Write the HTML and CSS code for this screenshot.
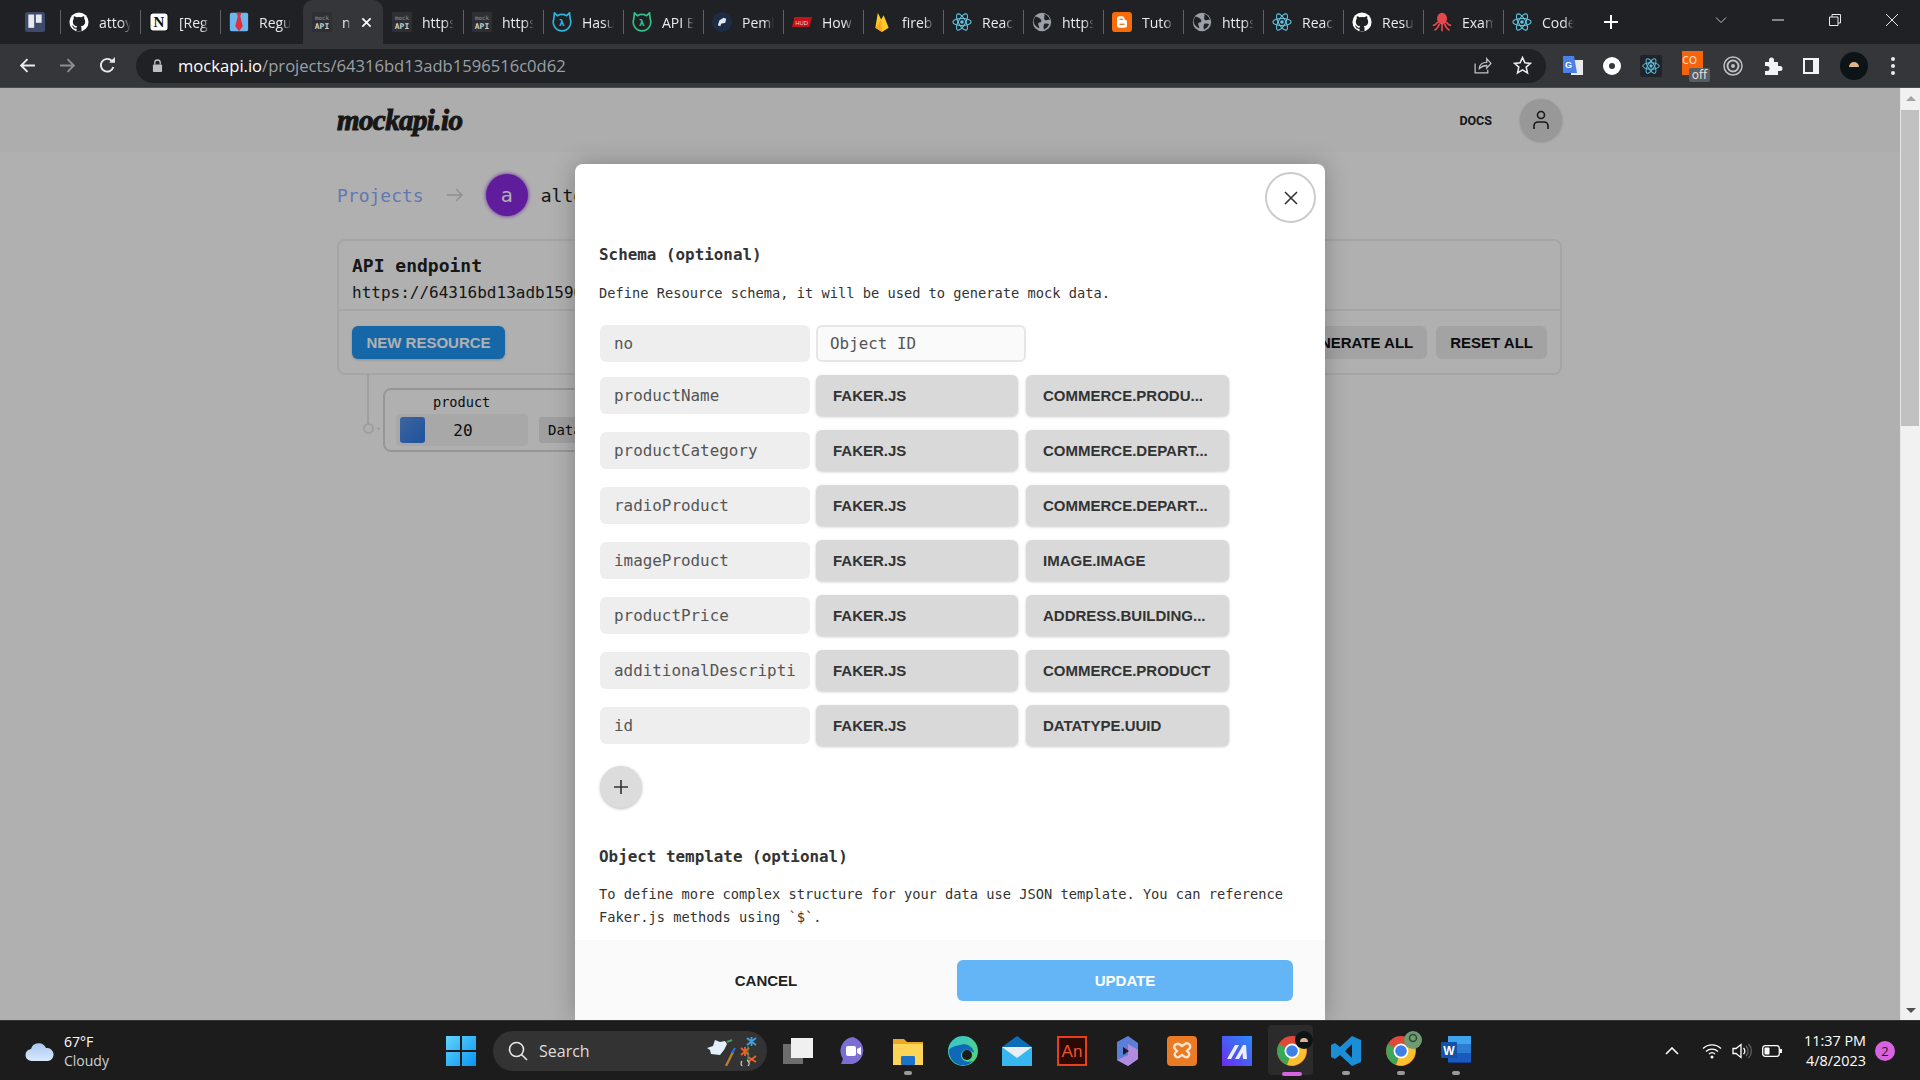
FILE: index.html
```html
<!DOCTYPE html>
<html lang="en">
<head>
    <meta charset="UTF-8">
    <meta name="viewport" content="width=device-width, initial-scale=1.0">
    <title>mockapi.io</title>
    <link rel="stylesheet" href="styles.css">
</head>
<body>
    <svg class="sprite" width="0" height="0">
        <defs>
            <symbol id="i-github" viewBox="0 0 24 24"><circle cx="12" cy="12" r="11.5" fill="#fff"/><path fill="#202124" d="M9 23.2v-3.1c-3.2.7-3.9-1.4-3.9-1.4-.5-1.3-1.3-1.7-1.3-1.7-1-.7.1-.7.1-.7 1.2.1 1.8 1.2 1.8 1.2 1 1.8 2.7 1.2 3.4 1 .1-.8.4-1.300.7-1.500-2.500-.3-5.200-1.300-5.200-5.700 0-1.300.5-2.300 1.200-3.100-.1-.3-.5-1.500.1-3 0 0 1-.3 3.200 1.200a11 11 0 0 1 5.800 0c2.200-1.500 3.200-1.200 3.200-1.200.6 1.500.2 2.700.1 3 .7.8 1.200 1.800 1.200 3.100 0 4.400-2.700 5.400-5.200 5.700.4.4.8 1.100.8 2.100v4.100z"/></symbol>
            <symbol id="i-react" viewBox="0 0 24 24"><g fill="none" stroke="#61c3e0" stroke-width="1.300"><ellipse cx="12" cy="12" rx="11" ry="4.300"/><ellipse cx="12" cy="12" rx="11" ry="4.300" transform="rotate(60 12 12)"/><ellipse cx="12" cy="12" rx="11" ry="4.300" transform="rotate(120 12 12)"/></g><circle cx="12" cy="12" r="2.200" fill="#61c3e0"/></symbol>
            <symbol id="i-globe" viewBox="0 0 24 24"><circle cx="12" cy="12" r="11" fill="#9aa0a6"/><path fill="#202124" d="M4 5.500c3 .5 6 2 7 4 .8 1.600-.5 3-2 3s-2 2-1 4l1 3c-4-1-7-5-7-8 0-2.500 1-4.500 2-6zM15 2.500c3 1 5.500 3.500 6.500 6.500l-4 1c-2 .2-3-1-3-2.500s.7-3 .5-5zM15 14c2-.5 4-.5 5.500.5-1 3-3 5.500-6 6.500-1-2-1-5.500.5-7z"/></symbol>
            <symbol id="i-mock" viewBox="0 0 24 24"><rect width="24" height="24" fill="#2e2f32"/><text x="12" y="9.500" class="mock-a">mock</text><text x="12" y="20" class="mock-b">API</text></symbol>
            <symbol id="i-hasura" viewBox="0 0 24 24"><path d="M3 1l3.500 3.500a11 11 0 0 1 11 0L21 1l1 8a10.500 10.500 0 1 1-20 0z" fill="none" stroke="currentColor" stroke-width="2"/><text x="12" y="17" class="hasura-l" fill="currentColor">λ</text></symbol>
        </defs>
    </svg>

    <div class="tabstrip">
        <div class="tab-pinned">
            <svg class="fav" viewBox="0 0 24 24"><rect width="24" height="24" rx="3" fill="#3d4a6b"/><rect x="4" y="3" width="7" height="16" fill="#e8e8f0"/><rect x="13" y="3" width="7" height="10" fill="#e8e8f0"/></svg>
        </div>
        <div class="tab"><svg class="fav"><use href="#i-github"/></svg><span class="tab-title">attoy</span></div>
        <div class="tab"><svg class="fav" viewBox="0 0 24 24"><rect x="1" y="1" width="22" height="22" rx="4" fill="#fff" stroke="#111" stroke-width="1.500"/><text x="12" y="18.500" class="notion-l">N</text></svg><span class="tab-title">[Reg</span></div>
        <div class="tab tab-before-active"><svg class="fav" viewBox="0 0 24 24"><rect x="1" y="1" width="22" height="22" rx="2" fill="#6db6ee"/><path d="M9 1h6l-1.500 4 3 12-4.500 6-4.500-6 3-12z" fill="#e0303a"/></svg><span class="tab-title">Regu</span></div>
        <div class="tab tab-active"><svg class="fav"><use href="#i-mock"/></svg><span class="tab-title tab-title-short">n</span><svg class="tab-close" viewBox="0 0 12 12"><path d="M1.500 1.500l9 9M10.500 1.500l-9 9" stroke="#fff" stroke-width="1.800"/></svg></div>
        <div class="tab"><svg class="fav"><use href="#i-mock"/></svg><span class="tab-title">https</span></div>
        <div class="tab"><svg class="fav"><use href="#i-mock"/></svg><span class="tab-title">https</span></div>
        <div class="tab"><svg class="fav hasura-blue"><use href="#i-hasura"/></svg><span class="tab-title">Hasu</span></div>
        <div class="tab"><svg class="fav hasura-green"><use href="#i-hasura"/></svg><span class="tab-title">API E</span></div>
        <div class="tab"><svg class="fav" viewBox="0 0 24 24"><circle cx="12" cy="12" r="12" fill="#1d2c44"/><path d="M7 16l2-6 5-3 3 1-1 5-5 1-1 3z" fill="#dfe6f0"/></svg><span class="tab-title">Pemb</span></div>
        <div class="tab"><svg class="fav" viewBox="0 0 24 24"><path d="M3 6h21l-3 12H0z" fill="#c4121a"/><text x="11.500" y="15" class="mud-l">HUD</text></svg><span class="tab-title">How</span></div>
        <div class="tab"><svg class="fav" viewBox="0 0 24 24"><path d="M4 19L7 1l4 8 3-5 6 15-8 5z" fill="#ffca28"/><path d="M4 19l7-10 1 15z" fill="#f9a825"/></svg><span class="tab-title">fireb</span></div>
        <div class="tab"><svg class="fav"><use href="#i-react"/></svg><span class="tab-title">Reac</span></div>
        <div class="tab"><svg class="fav"><use href="#i-globe"/></svg><span class="tab-title">https</span></div>
        <div class="tab"><svg class="fav" viewBox="0 0 24 24"><rect width="24" height="24" rx="4" fill="#f76b0a"/><rect x="6" y="5" width="9" height="7" rx="3" fill="#fff"/><rect x="6" y="9" width="12" height="10" rx="3" fill="#fff"/><rect x="9" y="8" width="4" height="1.500" fill="#f76b0a"/><rect x="9" y="14" width="6" height="1.500" fill="#f76b0a"/></svg><span class="tab-title">Tuto</span></div>
        <div class="tab"><svg class="fav"><use href="#i-globe"/></svg><span class="tab-title">https</span></div>
        <div class="tab"><svg class="fav"><use href="#i-react"/></svg><span class="tab-title">Reac</span></div>
        <div class="tab"><svg class="fav"><use href="#i-github"/></svg><span class="tab-title">Resu</span></div>
        <div class="tab"><svg class="fav" viewBox="0 0 24 24"><ellipse cx="12" cy="8" rx="6" ry="7" fill="#e5484d"/><path d="M7 12c-2 3-4 4-6 4M9 14c-1 4-3 6-6 8M12 14v9M15 14c1 4 3 6 6 8M17 12c2 3 4 4 6 4" stroke="#e5484d" stroke-width="2" fill="none"/></svg><span class="tab-title">Exam</span></div>
        <div class="tab"><svg class="fav"><use href="#i-react"/></svg><span class="tab-title">Code</span></div>
        <svg class="tab-new" viewBox="0 0 16 16"><path d="M8 1v14M1 8h14" stroke="#fff" stroke-width="2"/></svg>
        <div class="win-controls">
            <svg viewBox="0 0 12 12" class="win-chev"><path d="M1 3.500l5 5 5-5" fill="none" stroke="#bdc1c6"/></svg>
            <svg viewBox="0 0 12 12" class="win-btn"><path d="M0 6h12" stroke="#e8eaed"/></svg>
            <svg viewBox="0 0 12 12" class="win-btn"><path d="M.5 3h8.500v8.500H.5zM3 3V.5h8.500V9H9" fill="none" stroke="#e8eaed"/></svg>
            <svg viewBox="0 0 12 12" class="win-btn"><path d="M0 0l12 12M12 0L0 12" stroke="#e8eaed"/></svg>
        </div>
    </div>

    <div class="toolbar">
        <svg class="nav-btn" viewBox="0 0 16 16"><path d="M15 8H2M8 2L2 8l6 6" fill="none" stroke="#e8eaed" stroke-width="1.800"/></svg>
        <svg class="nav-btn" viewBox="0 0 16 16"><path d="M1 8h13M8 2l6 6-6 6" fill="none" stroke="#8b8e92" stroke-width="1.800"/></svg>
        <svg class="nav-btn" viewBox="0 0 16 16"><path d="M13.500 9.500A6 6 0 1 1 12 3.500" fill="none" stroke="#e8eaed" stroke-width="1.800"/><path d="M9.500 5.500H15V0z" fill="#e8eaed"/></svg>
        <div class="omnibox">
            <svg class="lock" viewBox="0 0 12 14"><path d="M3 6V4a3 3 0 0 1 6 0v2" fill="none" stroke="#bdc1c6" stroke-width="1.400"/><rect x="1" y="6" width="10" height="8" rx="1" fill="#bdc1c6"/></svg>
            <span class="url"><span class="url-host">mockapi.io</span>/projects/64316bd13adb1596516c0d62</span>
            <svg class="omni-icon omni-share" viewBox="0 0 18 18"><path d="M2 7v9h12v-3M6 12c0-4 3-6 7-6V2.500L17 7l-4 4.500V9c-3 0-5 1-7 3z" fill="none" stroke="#bdc1c6" stroke-width="1.200"/></svg>
            <svg class="omni-icon" viewBox="0 0 18 18"><path d="M9 1.500l2.300 5 5.200.5-4 3.500 1.200 5.500L9 13.200 4.300 16l1.200-5.500-4-3.500 5.200-.5z" fill="none" stroke="#e8eaed" stroke-width="1.500"/></svg>
        </div>
        <div class="ext-row">
            <svg class="ext" viewBox="0 0 22 22"><rect x="9" y="5" width="12" height="15" fill="#e8eaed"/><path d="M1 1h11l3 17H1z" fill="#4a80e8"/><text x="6.500" y="13" class="ext-g">G</text></svg>
            <svg class="ext" viewBox="0 0 22 22"><circle cx="11" cy="11" r="9" fill="#fff"/><circle cx="11" cy="11" r="3" fill="#35363a"/></svg>
            <svg class="ext" viewBox="0 0 22 22"><rect width="22" height="22" rx="2" fill="#20232a"/><use href="#i-react" x="2" y="2" width="18" height="18"/></svg>
            <div class="ext-com"><span class="ext-com-box">co</span><span class="ext-off">off</span></div>
            <svg class="ext" viewBox="0 0 22 22"><g fill="none" stroke="#bdc1c6"><circle cx="11" cy="11" r="9" stroke-width="1.500"/><circle cx="11" cy="11" r="5.500" stroke-width="2"/></g><circle cx="11" cy="11" r="2" fill="#bdc1c6"/></svg>
            <svg class="ext" viewBox="0 0 22 22"><path d="M4 7h4V5a2.500 2.500 0 0 1 5 0v2h4v4h2a2.500 2.500 0 0 1 0 5h-2v4H4v-4h2a2.500 2.500 0 0 0 0-5H4z" fill="#f1f3f4"/></svg>
            <svg class="ext" viewBox="0 0 22 22"><path d="M3 3h16v16H3zM5 5v12h8V5z" fill="#f1f3f4" fill-rule="evenodd"/></svg>
            <svg class="ext ext-profile" viewBox="0 0 28 28"><circle cx="14" cy="14" r="14" fill="#0c1418"/><path d="M9 15a5 5 0 0 1 10 0z" fill="#e3b48c"/></svg>
            <svg class="ext ext-menu" viewBox="0 0 6 22"><circle cx="3" cy="4" r="2" fill="#e8eaed"/><circle cx="3" cy="11" r="2" fill="#e8eaed"/><circle cx="3" cy="18" r="2" fill="#e8eaed"/></svg>
        </div>
    </div>

    <div class="viewport">
        <div class="page">
            <header class="site-header">
                <div class="container header-inner">
                    <span class="logo">mockapi.io</span>
                    <span class="docs">DOCS</span>
                    <div class="user-btn">
                        <svg viewBox="0 0 18 20" width="18" height="20"><circle cx="9" cy="5" r="3.500" fill="none" stroke="#222" stroke-width="1.600"/><path d="M2 19v-3a4 4 0 0 1 4-4h6a4 4 0 0 1 4 4v3" fill="none" stroke="#222" stroke-width="1.600"/></svg>
                    </div>
                </div>
            </header>

            <main class="container">
                <div class="crumbs">
                    <a class="crumb-link">Projects</a>
                    <svg class="crumb-arrow" viewBox="0 0 16 14"><path d="M0 7h15M9 1l6 6-6 6" fill="none" stroke="#d0d0d0" stroke-width="1.400"/></svg>
                    <div class="project-avatar">a</div>
                    <span class="project-name">altoproject</span>
                </div>

                <section class="endpoint-card">
                    <div class="endpoint-head">
                        <h2>API endpoint</h2>
                        <div class="endpoint-url">https://64316bd13adb1596516c0d62.mockapi.io/</div>
                    </div>
                    <div class="endpoint-foot">
                        <button class="btn btn-primary">NEW RESOURCE</button>
                        <div class="foot-right">
                            <button class="btn">GENERATE ALL</button>
                            <button class="btn">RESET ALL</button>
                        </div>
                    </div>
                </section>

                <div class="tree">
                    <span class="tree-line"></span>
                    <span class="tree-dot"></span>
                    <div class="resource">
                        <div class="resource-name">product</div>
                        <div class="resource-row">
                            <div class="count"><span class="count-bar"></span><span class="count-num">20</span></div>
                            <span class="data-btn">Data</span>
                        </div>
                    </div>
                </div>
            </main>

            <div class="overlay"></div>

            <div class="modal">
                <button class="modal-close"><svg viewBox="0 0 14 14" width="14" height="14"><path d="M1 1l12 12M13 1L1 13" stroke="#333" stroke-width="1.600"/></svg></button>
                <div class="modal-body">
                    <h3>Schema (optional)</h3>
                    <p class="hint">Define Resource schema, it will be used to generate mock data.</p>

                    <div class="field-row">
                        <span class="field-name">no</span>
                        <span class="field-type">Object ID</span>
                    </div>
                    <div class="field-row">
                        <span class="field-name">productName</span>
                        <span class="pill">FAKER.JS</span>
                        <span class="pill">COMMERCE.PRODU...</span>
                    </div>
                    <div class="field-row">
                        <span class="field-name">productCategory</span>
                        <span class="pill">FAKER.JS</span>
                        <span class="pill">COMMERCE.DEPART...</span>
                    </div>
                    <div class="field-row">
                        <span class="field-name">radioProduct</span>
                        <span class="pill">FAKER.JS</span>
                        <span class="pill">COMMERCE.DEPART...</span>
                    </div>
                    <div class="field-row">
                        <span class="field-name">imageProduct</span>
                        <span class="pill">FAKER.JS</span>
                        <span class="pill">IMAGE.IMAGE</span>
                    </div>
                    <div class="field-row">
                        <span class="field-name">productPrice</span>
                        <span class="pill">FAKER.JS</span>
                        <span class="pill">ADDRESS.BUILDING...</span>
                    </div>
                    <div class="field-row">
                        <span class="field-name">additionalDescripti</span>
                        <span class="pill">FAKER.JS</span>
                        <span class="pill">COMMERCE.PRODUCT</span>
                    </div>
                    <div class="field-row">
                        <span class="field-name">id</span>
                        <span class="pill">FAKER.JS</span>
                        <span class="pill">DATATYPE.UUID</span>
                    </div>

                    <button class="add-field"><svg viewBox="0 0 16 16" width="16" height="16"><path d="M8 1v14M1 8h14" stroke="#333" stroke-width="1.600"/></svg></button>

                    <h3 class="template-title">Object template (optional)</h3>
                    <p class="hint hint-template">To define more complex structure for your data use JSON template. You can reference Faker.js methods using `$`.</p>
                </div>
                <div class="modal-foot">
                    <button class="btn-cancel">CANCEL</button>
                    <button class="btn-update">UPDATE</button>
                </div>
            </div>
        </div>

        <div class="scrollbar">
            <div class="scroll-arrow"><span class="tri-up"></span></div>
            <div class="scroll-track"><div class="scroll-thumb"></div></div>
            <div class="scroll-arrow"><span class="tri-down"></span></div>
        </div>
    </div>

    <footer class="taskbar">
        <div class="weather">
            <svg viewBox="0 0 30 22" width="30" height="22"><defs><linearGradient id="cloud" x1="0" y1="0" x2="0" y2="1"><stop offset="0" stop-color="#a8c8f4"/><stop offset="1" stop-color="#dbe8fa"/></linearGradient></defs><path d="M7 21a6 6 0 0 1-1-12 8 8 0 0 1 15-1 6.500 6.500 0 0 1 2 13z" fill="url(#cloud)"/></svg>
            <div class="weather-text"><span>67°F</span><span class="weather-sub">Cloudy</span></div>
        </div>
        <svg class="win-logo" viewBox="0 0 30 30"><defs><linearGradient id="winb" x1="0" y1="0" x2="1" y2="1"><stop offset="0" stop-color="#62d4ff"/><stop offset="1" stop-color="#0a94f0"/></linearGradient></defs><path d="M0 0h14v14H0zM16 0h14v14H16zM0 16h14v14H0zM16 16h14v14H16z" fill="url(#winb)"/></svg>
        <div class="searchbox">
            <svg viewBox="0 0 20 20" width="20" height="20"><circle cx="8.500" cy="8.500" r="7" fill="none" stroke="#e8e8e8" stroke-width="1.600"/><path d="M13.500 13.500l5.500 5.500" stroke="#e8e8e8" stroke-width="1.600"/></svg>
            <span class="search-label">Search</span>
            <svg class="search-art" viewBox="0 0 58 30" width="58" height="30"><path d="M2 12l6-2 2-6 5 2 5-1 2 3-3 6-4 5-9-1-1-4z" fill="#e4effc"/><path d="M21 30l7-14" stroke="#b8802a" stroke-width="2.400"/><path d="M27 17l3-5" stroke="#2f6fd0" stroke-width="2"/><path d="M22 6l5-2" stroke="#4c9a5a" stroke-width="2"/><g stroke="#e8632a" stroke-width="1.800"><path d="M36 12l8 7M44 12l-8 7M40 11v9M43 21l8 5M51 20l-8 6"/></g><g stroke="#3fa0e0" stroke-width="1.800"><path d="M42 2l9 7M51 2l-9 7M46.500 1v9"/></g><path d="M43 10v16" stroke="#4c9a5a"/><path d="M37 25a4 4 0 1 0 5-1" fill="none" stroke="#ccc" stroke-width="1.200"/></svg>
        </div>

        <div class="apps">
            <div class="app">
                <svg viewBox="0 0 30 30"><rect x="0" y="8" width="20" height="20" fill="#6d6d6d"/><rect x="8" y="2" width="22" height="20" fill="#f0f0f0"/></svg>
            </div>
            <div class="app">
                <svg viewBox="0 0 30 30"><path d="M15 1a14 14 0 0 1 0 27H3l2-5A14 14 0 0 1 15 1z" fill="#7b6fd6"/><rect x="8" y="10" width="10" height="10" rx="2" fill="#fff"/><path d="M19 13l4-2v8l-4-2z" fill="#fff"/></svg>
            </div>
            <div class="app app-open">
                <svg viewBox="0 0 30 30"><path d="M0 3h11l3 3h16v23H0z" fill="#e9a826"/><rect y="8" width="30" height="21" fill="#fcd458"/><rect x="8" y="20" width="14" height="9" rx="1" fill="#1a73c8"/></svg>
            </div>
            <div class="app">
                <svg viewBox="0 0 30 30"><defs><linearGradient id="edge" x1="0" y1="0" x2="1" y2="1"><stop offset="0" stop-color="#36c5d8"/><stop offset="1" stop-color="#56d46a"/></linearGradient></defs><circle cx="15" cy="15" r="15" fill="url(#edge)"/><path d="M1 15a14 14 0 0 0 24 10c-6 2-12 0-12-6 0-3 3-6 8-5 3 1 4 3 5 2-2-7-9-9-14-7-6 1-11 3-11 6z" fill="#0f68b8"/><circle cx="19" cy="19" r="5" fill="#1c1c1c"/></svg>
            </div>
            <div class="app">
                <svg viewBox="0 0 30 30"><path d="M0 11L15 0l15 11v19H0z" fill="#0d6cb8"/><path d="M0 11h30v19H0z" fill="#38b6f0"/><path d="M0 11h30L15 22z" fill="#e8eef2"/></svg>
            </div>
            <div class="app">
                <svg viewBox="0 0 30 30"><rect x="1" y="1" width="28" height="28" fill="#2a0a04" stroke="#e83f1a" stroke-width="2"/><text x="15" y="21" class="an-l">An</text></svg>
            </div>
            <div class="app">
                <svg viewBox="0 0 30 30"><path d="M5 6l11-6 10 7v16l-10 7-11-6z" fill="#5b7fd8"/><path d="M16 8l10 6v9l-10 7-11-6 11-5z" fill="#b08ce0"/><path d="M11 11l6 4-6 4z" fill="#1c1c1c"/></svg>
            </div>
            <div class="app">
                <svg viewBox="0 0 30 30"><rect width="30" height="30" rx="4" fill="#e87b23"/><path d="M10 8a3 3 0 0 0-2 5l2 2-2 2a3 3 0 0 0 4 4l3-2 3 2a3 3 0 0 0 4-4l-2-2 2-2a3 3 0 0 0-4-5l-3 2-3-2z" fill="none" stroke="#fbe4cc" stroke-width="2.400"/></svg>
            </div>
            <div class="app">
                <svg viewBox="0 0 30 30"><defs><linearGradient id="mlogo" x1="0" y1="1" x2="1" y2="0"><stop offset="0" stop-color="#6a2cf0"/><stop offset="1" stop-color="#2a8cf8"/></linearGradient></defs><rect width="30" height="30" fill="url(#mlogo)"/><path d="M5 23l8-14h4L9 23zM13 23l8-14h3l1 14h-4l-.5-6-3.500 6z" fill="#e8f0ff"/></svg>
            </div>
            <div class="app app-active">
                <svg viewBox="0 0 30 30"><circle cx="15" cy="15" r="15" fill="#e0483a"/><path d="M15 15L2 8a15 15 0 0 0 8 21z" fill="#3aa856"/><path d="M15 15l-5 14a15 15 0 0 0 18-21z" fill="#fbc02d"/><circle cx="15" cy="15" r="7.500" fill="#fff"/><circle cx="15" cy="15" r="5.800" fill="#3f80e8"/></svg>
                <svg class="app-badge" viewBox="0 0 18 18"><circle cx="9" cy="9" r="9" fill="#0c1418"/><path d="M5 11a4 4 0 0 1 8 0z" fill="#e3b48c"/></svg>
            </div>
            <div class="app app-open">
                <svg viewBox="0 0 30 30"><path d="M21 0l9 4v22l-9 4-12-11-5 4-4-2V9l4-2 5 4zM21 8l-7 7 7 7z" fill="#1a8fd8"/></svg>
            </div>
            <div class="app app-open">
                <svg viewBox="0 0 30 30"><circle cx="15" cy="15" r="15" fill="#e0483a"/><path d="M15 15L2 8a15 15 0 0 0 8 21z" fill="#3aa856"/><path d="M15 15l-5 14a15 15 0 0 0 18-21z" fill="#fbc02d"/><circle cx="15" cy="15" r="7.500" fill="#fff"/><circle cx="15" cy="15" r="5.800" fill="#3f80e8"/></svg>
                <svg class="app-badge" viewBox="0 0 18 18"><circle cx="9" cy="9" r="9" fill="#6f9a72"/><circle cx="9" cy="7" r="3.500" fill="none" stroke="#2e4a34" stroke-width="1.500"/></svg>
            </div>
            <div class="app app-open">
                <svg viewBox="0 0 30 30"><path d="M7 0h23v8H7z" fill="#41a5ee"/><path d="M7 8h23v9H7z" fill="#2b7cd3"/><path d="M7 17h23v9H7z" fill="#185abd"/><path d="M7 26h23v1H7z" fill="#103f91"/><rect x="0" y="6" width="16" height="16" rx="1" fill="#1451a8"/><text x="8" y="18.500" class="word-l">W</text></svg>
            </div>
        </div>

        <div class="tray">
            <svg class="tray-caret" viewBox="0 0 14 8" width="14" height="8"><path d="M1 7l6-6 6 6" fill="none" stroke="#fff" stroke-width="1.600"/></svg>
            <svg class="tray-icon" viewBox="0 0 20 16"><g fill="none" stroke="#fff" stroke-width="1.300"><path d="M1 5.500a13 13 0 0 1 18 0"/><path d="M4 8.500a9 9 0 0 1 12 0"/><path d="M7 11a4.500 4.500 0 0 1 6 0"/></g><circle cx="10" cy="14" r="1.500" fill="#fff"/></svg>
            <svg class="tray-icon" viewBox="0 0 20 16"><path d="M1 5.500h3l5-4v13l-5-4H1z" fill="none" stroke="#fff" stroke-width="1.300"/><path d="M11.500 5a4 4 0 0 1 0 6" fill="none" stroke="#fff" stroke-width="1.300"/><path d="M14 3a7 7 0 0 1 0 10M16.500 1a10 10 0 0 1 0 14" fill="none" stroke="#666" stroke-width="1.200"/></svg>
            <svg class="tray-icon" viewBox="0 0 20 12"><rect x=".7" y=".7" width="16.600" height="10.600" rx="2.500" fill="none" stroke="#fff" stroke-width="1.300"/><rect x="2.500" y="2.500" width="5" height="7" rx="1" fill="#fff"/><rect x="18" y="4" width="2" height="4" fill="#fff"/></svg>
            <div class="clock"><span>11:37 PM</span><span>4/8/2023</span></div>
            <span class="notif">2</span>
        </div>
    </footer>
</body>
</html>
```

FILE: styles.css
```css
* {
    box-sizing: border-box;
}

body {
    margin: 0;
    width: 1920px;
    height: 1080px;
    overflow: hidden;
    display: flex;
    flex-direction: column;
    font-family: "DejaVu Sans Mono", monospace;
    background: #fff;
}

button {
    font-family: "Liberation Sans", Arial, sans-serif;
    border: none;
    padding: 0;
}

h2, h3, p {
    margin: 0;
}

.sprite {
    position: absolute;
}

/* svg labels */
.mock-a, .mock-b {
    font-family: "DejaVu Sans Mono", monospace;
    fill: #d0d0d0;
    text-anchor: middle;
}
.mock-a { font-size: 7px; fill: #9a9a9a; }
.mock-b { font-size: 9.5px; font-weight: bold; }
.hasura-l { font-family: "DejaVu Sans", sans-serif; font-size: 11px; font-weight: bold; text-anchor: middle; }
.notion-l { font-family: "Liberation Serif", serif; font-size: 18px; font-weight: bold; text-anchor: middle; fill: #111; }
.mud-l { font-family: "Liberation Sans", sans-serif; font-size: 7px; text-anchor: middle; fill: #f4d0d0; }
.ext-g { font-family: "Liberation Sans", sans-serif; font-size: 9px; font-weight: bold; text-anchor: middle; fill: #fff; }
.an-l { font-family: "Liberation Sans", sans-serif; font-size: 17px; text-anchor: middle; fill: #f0512a; }
.word-l { font-family: "Liberation Sans", sans-serif; font-size: 12px; font-weight: bold; text-anchor: middle; fill: #fff; }

/* browser tabs */
.tabstrip {
    height: 44px;
    flex: none;
    display: flex;
    align-items: stretch;
    background: #202124;
    font-family: "Open Sans", sans-serif;
    color: #e8eaed;
}

.tab-pinned {
    width: 60px;
    padding-left: 25px;
    display: flex;
    align-items: center;
}

.fav {
    width: 20px;
    height: 20px;
    flex: none;
}

.hasura-blue { color: #2bb5dd; }
.hasura-green { color: #2fc28a; }

.tab {
    flex: 0 0 80px;
    display: flex;
    align-items: center;
    gap: 10px;
    padding-left: 9px;
    position: relative;
    font-size: 14px;
}

.tab-before-active {
    flex-basis: 83px;
}

.tab::before {
    content: "";
    position: absolute;
    left: 0;
    top: 10px;
    height: 24px;
    width: 1px;
    background: #5f6368;
}

.tab:last-of-type::after {
    content: "";
    position: absolute;
    right: 0;
    top: 10px;
    height: 24px;
    width: 1px;
    background: #5f6368;
}

.tab-active {
    background: #35363a;
    border-radius: 10px 10px 0 0;
}
.tab-active::before, .tab-active + .tab::before {
    display: none;
}

.tab-title {
    width: 32px;
    overflow: hidden;
    white-space: nowrap;
    -webkit-mask-image: linear-gradient(to right, #000 70%, transparent);
    mask-image: linear-gradient(to right, #000 70%, transparent);
}

.tab-title-short {
    width: 8px;
}

.tab-close {
    width: 11px;
    height: 11px;
    margin-left: 1px;
}

.tab-new {
    width: 16px;
    height: 16px;
    align-self: center;
    margin-left: 20px;
}

.win-controls {
    margin-left: auto;
    display: flex;
    align-items: center;
    gap: 45px;
    padding: 0 22px 4px 0;
}

.win-controls svg {
    width: 12px;
    height: 12px;
}

/* browser toolbar */
.toolbar {
    height: 44px;
    flex: none;
    display: flex;
    align-items: center;
    background: #35363a;
    border-bottom: 1px solid #4a4b4e;
    font-family: "Open Sans", sans-serif;
}

.nav-btn {
    width: 17px;
    height: 17px;
    margin-left: 19px;
    margin-right: 4px;
}

.omnibox {
    width: 1410px;
    height: 34px;
    margin-left: 16px;
    padding: 0 14px 0 16px;
    border-radius: 17px;
    background: #202124;
    display: flex;
    align-items: center;
}

.lock {
    width: 11px;
    height: 13px;
    margin-right: 15px;
}

.url {
    font-size: 16.6px;
    color: #9aa0a6;
}

.url-host {
    color: #fff;
}

.omni-icon {
    width: 19px;
    height: 19px;
    margin-left: 21px;
}

.omni-share {
    margin-left: auto;
}

.ext-row {
    display: flex;
    align-items: center;
    margin-left: 16px;
    gap: 17px;
}

.ext {
    width: 22px;
    height: 22px;
    flex: none;
}

.ext-profile {
    width: 28px;
    height: 28px;
    margin-left: 1px;
}

.ext-menu {
    width: 6px;
    margin-left: 5px;
}

.ext-com {
    width: 26px;
    height: 30px;
    margin: 0 -3px 0 3px;
    position: relative;
}

.ext-com-box {
    display: block;
    width: 21px;
    height: 24px;
    background: #f4640c;
    color: #ffd9c2;
    font-size: 14px;
    line-height: 16px;
}

.ext-off {
    position: absolute;
    right: -2px;
    bottom: -1px;
    padding: 0 3px;
    border-radius: 2px;
    background: #5b5c5f;
    color: #e8e8e8;
    font-size: 12px;
    line-height: 14px;
}

/* page behind the dialog */
.viewport {
    flex: 1;
    min-height: 0;
    display: flex;
}

.page {
    flex: 1;
    position: relative;
    overflow: hidden;
    background: #fff;
}

.container {
    width: 1225px;
    margin-left: 337px;
}

.site-header {
    height: 64px;
    background: #fbfbfb;
}

.header-inner {
    height: 100%;
    display: flex;
    align-items: center;
}

.logo {
    font-family: "Liberation Serif", serif;
    font-style: italic;
    font-weight: bold;
    font-size: 29px;
    letter-spacing: -.6px;
    color: #222;
    -webkit-text-stroke: 1px #222;
}

.docs {
    margin-left: auto;
    font-family: "Roboto", sans-serif;
    font-weight: bold;
    font-size: 12.5px;
    color: #222;
}

.user-btn {
    width: 42px;
    height: 42px;
    margin-left: 28px;
    border-radius: 50%;
    background: #dcdcdc;
    box-shadow: 0 1px 3px rgba(0,0,0,.2);
    display: flex;
    align-items: center;
    justify-content: center;
}

.crumbs {
    margin-top: 22px;
    height: 42px;
    display: flex;
    align-items: center;
    font-size: 18px;
    white-space: nowrap;
}

.crumb-link {
    color: #8faeff;
}

.crumb-arrow {
    width: 16px;
    height: 14px;
    margin-left: 23px;
}

.project-avatar {
    width: 42px;
    height: 42px;
    margin-left: 23px;
    border-radius: 50%;
    background: #8a2be2;
    box-shadow: 0 0 4px #8a2be2;
    color: #fff;
    font-size: 20px;
    display: flex;
    align-items: center;
    justify-content: center;
}

.project-name {
    margin-left: 13px;
    color: #222;
}

.endpoint-card {
    margin-top: 23px;
    height: 136px;
    border: 2px solid #efefef;
    border-radius: 8px;
    color: #222;
}

.endpoint-head {
    height: 70px;
    padding: 13px 13px 0;
    border-bottom: 2px solid #efefef;
}

.endpoint-head h2 {
    font-size: 18px;
    line-height: 24px;
}

.endpoint-url {
    width: 223px;
    overflow: hidden;
    font-size: 16px;
    line-height: 24px;
    margin-top: 3px;
    white-space: nowrap;
}

.endpoint-foot {
    display: flex;
    justify-content: space-between;
    padding: 15px 13px 0;
}

.foot-right {
    display: flex;
    gap: 9px;
}

.btn {
    height: 33px;
    padding: 0 14px;
    border-radius: 6px;
    background: #ececec;
    color: #111;
    font-weight: bold;
    font-size: 15px;
}

.btn-primary {
    background: #2196f3;
    color: #fff;
    width: 153px;
    box-shadow: 0 1px 3px rgba(0,0,0,.2);
}

.tree {
    position: relative;
    padding: 13px 0 0 46px;
}

.tree-line {
    position: absolute;
    left: 30px;
    top: 0;
    width: 2px;
    height: 49px;
    background: #e6e6e6;
}

.tree-dot {
    position: absolute;
    left: 26px;
    top: 48px;
    width: 11px;
    height: 11px;
    border: 2px solid #e6e6e6;
    border-radius: 50%;
    background: #fff;
    box-shadow: 10px 0 0 -4px #e6e6e6;
}

.resource {
    width: 500px;
    height: 64px;
    border: 2px solid #dadada;
    border-radius: 8px;
    padding: 1px 0 0 11px;
    color: #111;
}

.resource-name {
    font-size: 13.6px;
    line-height: 22px;
    padding-left: 37px;
    margin-bottom: 1px;
}

.resource-row {
    display: flex;
    align-items: center;
    gap: 11px;
}

.count {
    width: 132px;
    height: 32px;
    border-radius: 4px;
    background: #f3f3f3;
    padding-left: 4px;
    display: flex;
    align-items: center;
    font-size: 16px;
}

.count-bar {
    width: 25px;
    height: 26px;
    border-radius: 3px;
    background: linear-gradient(135deg, #5c92e6, #2a78e4);
}

.count-num {
    width: 76px;
    text-align: center;
}

.data-btn {
    padding: 4px 9px;
    border-radius: 3px;
    background: #e6e6e6;
    font-size: 14px;
    line-height: 18px;
}

.overlay {
    position: absolute;
    inset: 0;
    background: rgba(0,0,0,.31);
}

/* dialog */
.modal {
    position: absolute;
    top: 76px;
    bottom: 0;
    left: 575px;
    width: 750px;
    background: #fff;
    border-radius: 8px 8px 0 0;
    box-shadow: 0 0 24px rgba(0,0,0,.25);
    display: flex;
    flex-direction: column;
    color: #333;
}

.modal-close {
    position: absolute;
    top: 8px;
    right: 9px;
    width: 51px;
    height: 51px;
    border-radius: 50%;
    border: 2px solid #ccc;
    background: #fff;
    display: flex;
    align-items: center;
    justify-content: center;
}

.modal-body {
    flex: 1;
    min-height: 0;
    overflow: hidden;
    padding: 79px 25px 0;
}

.modal-body h3 {
    font-size: 15.9px;
    line-height: 24px;
    margin-left: -1px;
}

.hint {
    font-size: 13.7px;
    line-height: 23px;
    margin: 15px 0 0 -1px;
    color: #333;
}

.field-row {
    display: flex;
    align-items: center;
    height: 41px;
    margin-top: 14px;
}

.field-row:first-of-type {
    height: 37px;
    margin-top: 20px;
    margin-bottom: -1px;
}

.field-name {
    width: 210px;
    height: 37px;
    padding-left: 14px;
    margin-right: 6px;
    border-radius: 6px;
    background: #eee;
    font-size: 15.9px;
    line-height: 37px;
    color: #555;
    white-space: nowrap;
    overflow: hidden;
}

.field-type {
    width: 210px;
    height: 37px;
    padding-left: 12px;
    border: 2px solid #e6e6e6;
    border-radius: 6px;
    background: #fafafa;
    font-size: 15.9px;
    line-height: 33px;
    color: #555;
}

.pill {
    width: 202px;
    height: 41px;
    padding-left: 17px;
    border-radius: 6px;
    background: #d9d9d9;
    box-shadow: 0 1px 3px rgba(0,0,0,.2);
    font-family: "Liberation Sans", Arial, sans-serif;
    font-weight: bold;
    font-size: 15px;
    line-height: 41px;
    color: #333;
    white-space: nowrap;
}

.pill + .pill {
    width: 203px;
    margin-left: 8px;
}

.add-field {
    display: flex;
    align-items: center;
    justify-content: center;
    width: 42px;
    height: 42px;
    margin-top: 20px;
    border-radius: 50%;
    background: #dcdcdc;
    box-shadow: 0 1px 3px rgba(0,0,0,.25);
}

.modal-body .template-title {
    margin-top: 37px;
}

.hint-template {
    width: 702px;
    margin-top: 14px;
}

.modal-foot {
    height: 80px;
    flex: none;
    background: #fafafa;
    display: flex;
    align-items: center;
    padding-right: 32px;
}

.btn-cancel {
    flex: 1;
    background: none;
    font-weight: bold;
    font-size: 15px;
    color: #222;
}

.btn-update {
    width: 336px;
    height: 41px;
    border-radius: 6px;
    background: #64b5f6;
    color: #fff;
    font-weight: bold;
    font-size: 15px;
}

/* page scrollbar */
.scrollbar {
    width: 20px;
    flex: none;
    display: flex;
    flex-direction: column;
    background: #f1f1f1;
    border-left: 1px solid #e8e8e8;
}

.scroll-arrow {
    height: 20px;
    display: flex;
    align-items: center;
    justify-content: center;
}

.tri-up, .tri-down {
    width: 0;
    height: 0;
    border-left: 5px solid transparent;
    border-right: 5px solid transparent;
}
.tri-up { border-bottom: 5px solid #a3a3a3; }
.tri-down { border-top: 5px solid #505050; }

.scroll-track {
    flex: 1;
}

.scroll-thumb {
    height: 316px;
    background: #c1c1c1;
    margin: 2px 1px 0 0;
}

/* windows taskbar */
.taskbar {
    height: 60px;
    flex: none;
    display: flex;
    align-items: center;
    background: #1c1c1c;
    border-top: 1px solid #333;
    color: #fff;
    font-family: "Open Sans", sans-serif;
    font-size: 14px;
}

.weather {
    width: 446px;
    padding-left: 25px;
    display: flex;
    align-items: center;
    gap: 9px;
    line-height: 19px;
}

.weather-text, .clock {
    display: flex;
    flex-direction: column;
}

.weather-sub {
    color: #d0d0d0;
}

.win-logo {
    width: 30px;
    height: 30px;
    flex: none;
}

.searchbox {
    width: 274px;
    height: 40px;
    margin-left: 17px;
    padding: 0 4px 0 15px;
    border-radius: 20px;
    background: #333;
    display: flex;
    align-items: center;
    font-size: 16px;
    color: #ddd;
}

.search-label {
    margin-left: 11px;
}

.search-art {
    margin-left: auto;
}

.apps {
    display: flex;
    gap: 24.85px;
    margin-left: 16px;
}

.app {
    width: 30px;
    height: 59px;
    display: flex;
    align-items: center;
    position: relative;
}

.app svg:first-child {
    width: 30px;
    height: 30px;
    position: relative;
}

.app-open::after {
    content: "";
    position: absolute;
    left: 11px;
    bottom: 5px;
    width: 8px;
    height: 4px;
    border-radius: 2px;
    background: #9a9a9a;
}

.app-active::before {
    content: "";
    position: absolute;
    left: -9px;
    top: 4px;
    width: 45px;
    height: 50px;
    border-radius: 4px;
    background: #2b2b2b;
}

.app-active::after {
    content: "";
    position: absolute;
    left: 5px;
    bottom: 4px;
    width: 20px;
    height: 4px;
    border-radius: 2px;
    background: #d763e0;
}

.app-badge {
    position: absolute;
    right: -6px;
    top: 10px;
    width: 18px;
    height: 18px;
}

.tray {
    margin-left: auto;
    display: flex;
    align-items: center;
    padding-right: 25px;
}

.tray-caret {
    margin-right: 23px;
}

.tray-icon {
    width: 20px;
    height: 16px;
    margin-right: 10px;
}

.clock {
    margin-left: 12px;
    align-items: flex-end;
    font-size: 14.4px;
    line-height: 20px;
}

.notif {
    width: 20px;
    height: 20px;
    margin-left: 9px;
    border-radius: 50%;
    background: #d763e0;
    color: #1c1c1c;
    font-size: 13px;
    line-height: 20px;
    text-align: center;
}
```
